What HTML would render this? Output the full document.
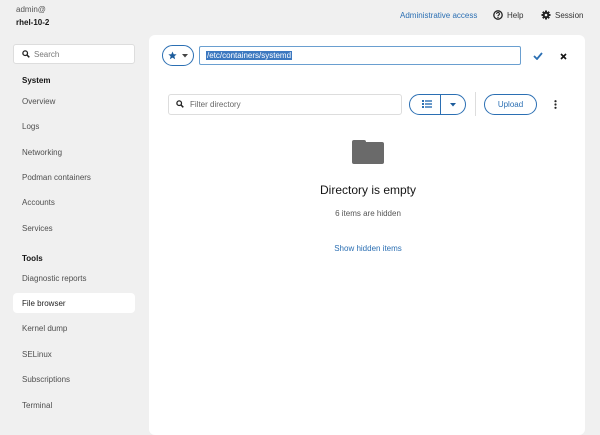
<!DOCTYPE html>
<html><head><meta charset="utf-8"><style>
*{box-sizing:border-box;margin:0;padding:0}
body{width:600px;height:425px;overflow:hidden;background:#f0f0f0;font-family:"Liberation Sans",sans-serif;color:#151515;position:relative}
.a{position:absolute}
.nav{font-size:8px;color:#4f4f4f;left:22px}
.hd{font-size:8px;font-weight:bold;left:22px;color:#151515}
.blue{color:#2b6fb3}
</style></head><body>
<div class="a" style="left:16px;top:5px;font-size:8px;color:#555">admin@</div>
<div class="a" style="left:16px;top:18px;font-size:8px;font-weight:bold">rhel-10-2</div>
<div class="a blue" style="left:400px;top:11px;font-size:8px">Administrative access</div>
<svg class="a" style="left:493px;top:10px" width="10" height="10" viewBox="0 0 10 10"><circle cx="5" cy="5" r="4.2" fill="none" stroke="#222" stroke-width="1.3"/><path d="M3.6 3.9a1.4 1.4 0 1 1 1.9 1.3c-.4.2-.5.4-.5.9" fill="none" stroke="#222" stroke-width="1.1"/><circle cx="5" cy="7.4" r=".7" fill="#222"/></svg>
<div class="a" style="left:507px;top:11px;font-size:8px;color:#333">Help</div>
<svg class="a" style="left:541px;top:10px" width="10" height="10" viewBox="0 0 10 10"><circle cx="5" cy="5" r="3.2" fill="#222"/><g stroke="#222" stroke-width="2"><path d="M5 0.5V9.5M0.5 5H9.5M1.8 1.8L8.2 8.2M8.2 1.8L1.8 8.2"/></g><circle cx="5" cy="5" r="1.3" fill="#f0f0f0"/></svg>
<div class="a" style="left:555px;top:11px;font-size:8px;color:#333">Session</div>

<div class="a" style="left:13px;top:44px;width:122px;height:20px;background:#fff;border:1px solid #ddd;border-radius:3px"></div>
<svg class="a" style="left:22px;top:50px" width="8" height="8" viewBox="0 0 8 8"><circle cx="3.2" cy="3.2" r="2.3" fill="none" stroke="#222" stroke-width="1.3"/><path d="M5 5L7.3 7.3" stroke="#222" stroke-width="1.5"/></svg>
<div class="a" style="left:34px;top:50px;font-size:8px;color:#777">Search</div>
<div class="a hd" style="top:76px">System</div>
<div class="a nav" style="top:97px">Overview</div>
<div class="a nav" style="top:122px">Logs</div>
<div class="a nav" style="top:148px">Networking</div>
<div class="a nav" style="top:173px">Podman containers</div>
<div class="a nav" style="top:198px">Accounts</div>
<div class="a nav" style="top:224px">Services</div>
<div class="a hd" style="top:254px">Tools</div>
<div class="a nav" style="top:274px">Diagnostic reports</div>
<div class="a" style="left:13px;top:293px;width:122px;height:20px;background:#fff;border-radius:4px"></div>
<div class="a nav" style="top:299px;color:#222">File browser</div>
<div class="a nav" style="top:324px">Kernel dump</div>
<div class="a nav" style="top:350px">SELinux</div>
<div class="a nav" style="top:375px">Subscriptions</div>
<div class="a nav" style="top:401px">Terminal</div>

<div class="a" style="left:149px;top:35px;width:436px;height:400px;background:#fff;border-radius:6px"></div>
<div class="a" style="left:162px;top:45px;width:32px;height:21px;border:1px solid #2b6fb3;border-radius:11px"></div>
<svg class="a" style="left:168px;top:51px" width="9" height="9" viewBox="0 0 10 10"><path d="M5 0.5L6.3 3.6L9.6 3.8L7.1 5.9L7.9 9.2L5 7.4L2.1 9.2L2.9 5.9L0.4 3.8L3.7 3.6Z" fill="#1c5c9c"/></svg>
<svg class="a" style="left:182px;top:54px" width="6" height="4" viewBox="0 0 6 4"><path d="M0 0H6L3 3.5Z" fill="#444"/></svg>
<div class="a" style="left:199px;top:46px;width:322px;height:19px;border:1.5px solid #6a9fd0;border-radius:2px"></div>
<div class="a" style="left:206px;top:51px;font-size:8px;background:#3c78c0;color:#fff;padding:0 1px">/etc/containers/systemd</div>
<svg class="a" style="left:533px;top:52px" width="10" height="8" viewBox="0 0 10 8"><path d="M1 4L4 7L9 1" fill="none" stroke="#2b6fb3" stroke-width="1.8"/></svg>
<svg class="a" style="left:560px;top:53px" width="7" height="7" viewBox="0 0 7 7"><path d="M1 1L6 6M6 1L1 6" stroke="#151515" stroke-width="1.6"/></svg>

<div class="a" style="left:168px;top:94px;width:234px;height:21px;border:1px solid #ddd;border-radius:3px"></div>
<svg class="a" style="left:176px;top:100px" width="8" height="8" viewBox="0 0 8 8"><circle cx="3.2" cy="3.2" r="2.3" fill="none" stroke="#222" stroke-width="1.3"/><path d="M5 5L7.3 7.3" stroke="#222" stroke-width="1.5"/></svg>
<div class="a" style="left:190px;top:100px;font-size:8px;color:#666">Filter directory</div>
<div class="a" style="left:409px;top:94px;width:57px;height:21px;border:1px solid #2b6fb3;border-radius:11px"></div>
<div class="a" style="left:440px;top:94px;width:1px;height:21px;background:#2b6fb3"></div>
<svg class="a" style="left:422px;top:100px" width="10" height="8" viewBox="0 0 10 8"><g fill="#2b6fb3"><rect x="0" y="0" width="2" height="2"/><rect x="3" y="0.3" width="7" height="1.4"/><rect x="0" y="3" width="2" height="2"/><rect x="3" y="3.3" width="7" height="1.4"/><rect x="0" y="6" width="2" height="2"/><rect x="3" y="6.3" width="7" height="1.4"/></g></svg>
<svg class="a" style="left:450px;top:103px" width="6" height="4" viewBox="0 0 6 4"><path d="M0 0H6L3 3.5Z" fill="#1c5c9c"/></svg>
<div class="a" style="left:475px;top:92px;width:1px;height:24px;background:#ddd"></div>
<div class="a blue" style="left:484px;top:94px;width:53px;height:21px;border:1px solid #2b6fb3;border-radius:11px;font-size:8px;text-align:center;line-height:19px">Upload</div>
<svg class="a" style="left:554px;top:100px" width="3" height="9" viewBox="0 0 3 9"><g fill="#222"><circle cx="1.5" cy="1.2" r="1.1"/><circle cx="1.5" cy="4.5" r="1.1"/><circle cx="1.5" cy="7.8" r="1.1"/></g></svg>

<div class="a" style="left:352px;top:142px;width:32px;height:22px;background:#6a6a6a;border-radius:2px"></div>
<div class="a" style="left:352px;top:140px;width:14px;height:5px;background:#6a6a6a;border-radius:2px 2px 0 0"></div>
<div class="a" style="left:268px;top:183px;width:200px;text-align:center;font-size:12px">Directory is empty</div>
<div class="a" style="left:268px;top:209px;width:200px;text-align:center;font-size:8px;color:#555">6 items are hidden</div>
<div class="a blue" style="left:268px;top:244px;width:200px;text-align:center;font-size:8px">Show hidden items</div>
</body></html>
